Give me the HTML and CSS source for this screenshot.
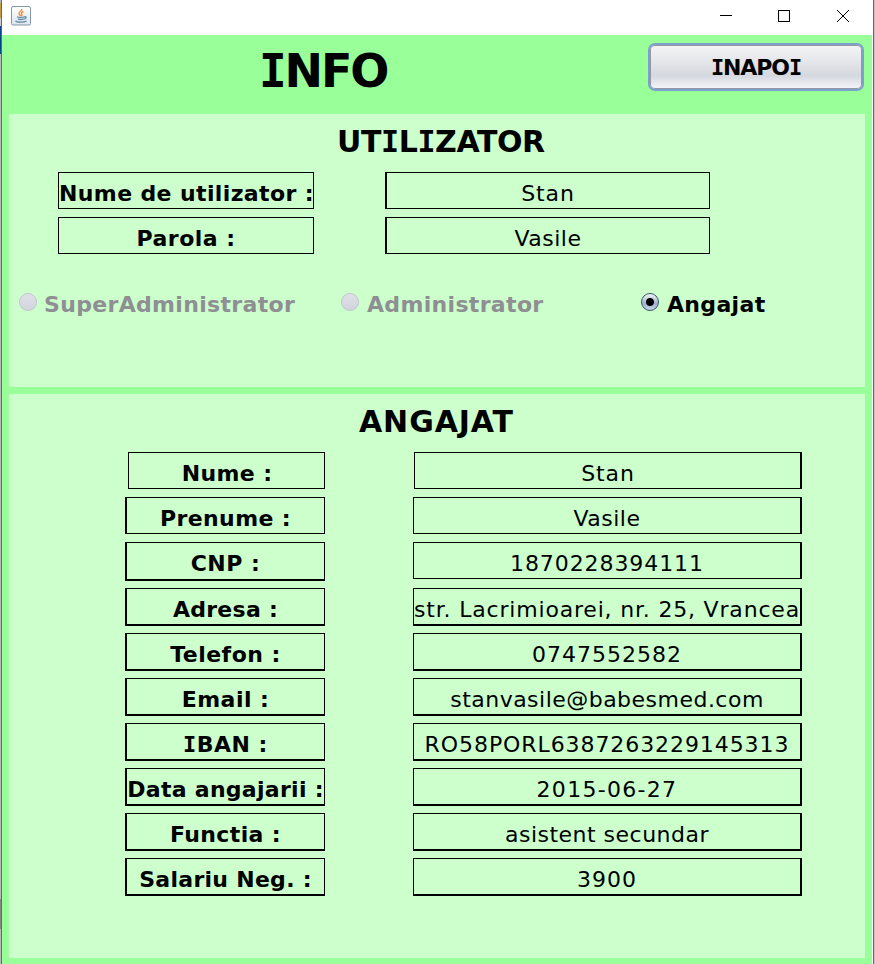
FILE: index.html
```html
<!DOCTYPE html>
<html lang="ro">
<head>
<meta charset="utf-8">
<title>Info</title>
<link rel="stylesheet" href="styles.css">
</head>
<body>
<div class="desktop">
  <div class="edge-left"></div>
  <main class="window">
    <header class="titlebar">
      <svg class="java" width="20" height="20" viewBox="0 0 20 20">
        <defs><linearGradient id="j" x2="0" y2="1"><stop offset="0" stop-color="#fff"/><stop offset="1" stop-color="#dde5ec"/></linearGradient></defs>
        <rect x=".5" y=".5" width="19" height="18.500" rx="1.500" fill="url(#j)" stroke="#8298ab"/>
        <path d="M10.800 3c.5 2-3 2.800-2.800 4.500.1 1 1 1.500 1.500 2.500M12.500 5.500c-2 1-2.500 1.700-1.800 2.700.5.700.2 1.300-.5 1.800" fill="none" stroke="#f09040" stroke-width="1.500"/>
        <path d="M6 10.800c1.500.8 6 .8 7.500 0M6.800 12.800c1.500.7 4.500.7 6 0M13.500 10.800c2-.5 2.300 1.500-.2 2.200M4.500 15c1.500 1.500 9 1.500 11 0" fill="none" stroke="#5f86a3" stroke-width="1.300"/>
      </svg>
      <svg class="controls" width="130" height="14" viewBox="0 0 130 14" fill="none" stroke="#000" shape-rendering="crispEdges">
        <path d="M0 7.500h12M58.500 2.500h11v11h-11z"/>
        <path d="M117 2l12 12M129 2l-12 12" shape-rendering="auto"/>
      </svg>
    </header>
    <section class="top">
      <h1><span class="serif-i">I</span>NFO</h1>
      <button class="back"><span class="serif-i">I</span>NAPO<span class="serif-i">I</span></button>
    </section>
    <section class="panel user">
      <h2 class="h-user">UT<span class="serif-i">I</span>L<span class="serif-i">I</span>ZATOR</h2>
      <dl class="rows">
        <dt class="t4">Nume de utilizator :</dt><dd class="t9">Stan</dd>
        <dt class="t5">Parola :</dt><dd class="t5">Vasile</dd>
      </dl>
      <div class="radios">
        <label class="off"><i class="dot"></i>SuperAdministrator</label>
        <label class="off"><i class="dot"></i>Administrator</label>
        <label><i class="dot on"></i>Angajat</label>
      </div>
    </section>
    <section class="panel staff">
      <h2 class="h-staff">ANGAJAT</h2>
      <dl class="rows">
        <dt class="t4 thin">Nume :</dt><dd class="t9 thin">Stan</dd>
        <dt class="t4">Prenume :</dt><dd class="t5">Vasile</dd>
        <dt class="t5 tall deep">CNP :</dt><dd class="t9">1870228394111</dd>
        <dt class="t3 deep">Adresa :</dt><dd class="t8 deep">str. Lacrimioarei, nr. 25, Vrancea</dd>
        <dt class="t5 deep">Telefon :</dt><dd class="t10 deep">0747552582</dd>
        <dt class="t5 deep">Email :</dt><dd class="t5 deep">stanvasile@babesmed.com</dd>
        <dt class="t5 deep"><span class="serif-i">I</span>BAN :</dt><dd class="t9 deep">RO58PORL6387263229145313</dd>
        <dt class="t3 deep">Data angajarii :</dt><dd class="t13 deep">2015-06-27</dd>
        <dt class="t4 deep">Functia :</dt><dd class="t5 deep">asistent secundar</dd>
        <dt class="t3 deep">Salariu Neg. :</dt><dd class="t10 deep">3900</dd>
      </dl>
    </section>
  </main>
  <div class="edge-right"></div>
</div>
</body>
</html>
```
FILE: styles.css
```css
* { box-sizing: border-box; }
body { margin: 0; font-family: "DejaVu Sans", Verdana, sans-serif; font-size: 22px; color: #000; overflow: hidden; }
h1, h2, dl, dd { margin: 0; }
.desktop { display: grid; grid-template-columns: 2px 870px 3px; height: 964px; }
.edge-left {
  border-right: 1px solid #666;
  background: linear-gradient(#b9b9b9 3px, #c59c43 3px 18px, #ccc 18px 26px, #00458c 26px 54px, #b9b9b9 54px 899px, #888 899px 929px, #b9b9b9 929px);
}
.edge-right { border-left: 1px solid #fff; background: linear-gradient(90deg, #66666e 1px, #c4c4c4 1px); }
.window { background: #9f9; display: flex; flex-direction: column; }
.titlebar { height: 35px; background: #fff; display: flex; justify-content: space-between; padding: 6px 22px 0 9px; }
.controls { margin-top: 2px; }
.top { height: 79px; display: flex; justify-content: space-between; padding: 8px 8px 0 257px; }
h1 { font-size: 46px; line-height: 56px; letter-spacing: -2.1px; white-space: nowrap; }
.serif-i { font-family: "DejaVu Sans Mono", monospace; }
.back {
  width: 216px; height: 48px; padding: 1px 0 0; border: 2px solid #7da0cc; border-radius: 7px;
  background: linear-gradient(#f5f5f7, #e2e3e7 45%, #d5d8df 70%, #f5f6fb);
  box-shadow: inset 0 0 0 1px #9297a1;
  font: bold 22px "DejaVu Sans", sans-serif; color: #000; letter-spacing: -1.1px;
}
.panel { margin: 0 7px; background: #cfc; }
.user { height: 273px; }
.staff { height: 564px; margin-top: 7px; }
h2 { font-size: 30px; line-height: 36px; height: 58px; padding-top: 10px; white-space: nowrap; }
.h-user { padding-left: 328px; letter-spacing: -.4px; }
.h-staff { padding-left: 350px; letter-spacing: .9px; }
.rows { display: grid; align-items: start; text-align: center; white-space: nowrap; }
.user .rows { grid-template-columns: 256px 325px; column-gap: 71px; grid-auto-rows: 45px; padding-left: 49px; }
.staff .rows { grid-template-columns: 200px 389px; column-gap: 88px; grid-template-rows: 45px 45px 46px; grid-auto-rows: 45px; padding-left: 116px; }
dt, dd { height: 37px; border: 1px solid #000; line-height: 42px; }
dt { font-weight: bold; }
.user dd, .staff dt { border-left-width: 2px; }
.staff dd { border-right-width: 2px; }
.staff dt.thin { margin-left: 3px; border-left-width: 1px; padding-left: 1px; }
.staff dd.thin { margin-left: 1px; padding-left: 1px; }
.deep { height: 38px; border-bottom-width: 2px; }
.deep.tall { height: 39px; }
.t3 { letter-spacing: .28px; }
.t4 { letter-spacing: .38px; }
.t5 { letter-spacing: .48px; }
.t8 { letter-spacing: .81px; }
.t9 { letter-spacing: .92px; }
.t10 { letter-spacing: 1px; }
.t13 { letter-spacing: 1.3px; }
.radios { display: grid; grid-template-columns: 322px 300px 1fr; padding: 27px 0 0 10px; font-weight: bold; letter-spacing: .33px; white-space: nowrap; }
.radios label { display: flex; line-height: 32px; }
.radios label + label .dot { margin-right: 8px; }
.off { color: #8e8f93; }
.dot { width: 18px; height: 18px; margin: 4px 7px 0 0; border-radius: 50%; border: 1px solid #c3c5d0; background: linear-gradient(#e0e0e8, #d2d4dd); }
.dot.on { border-color: #3d5068; background: radial-gradient(circle, #000 3.500px, transparent 4.500px), linear-gradient(#f4f6f9, #9fb0c8 60%, #c8d8ec); }
```
